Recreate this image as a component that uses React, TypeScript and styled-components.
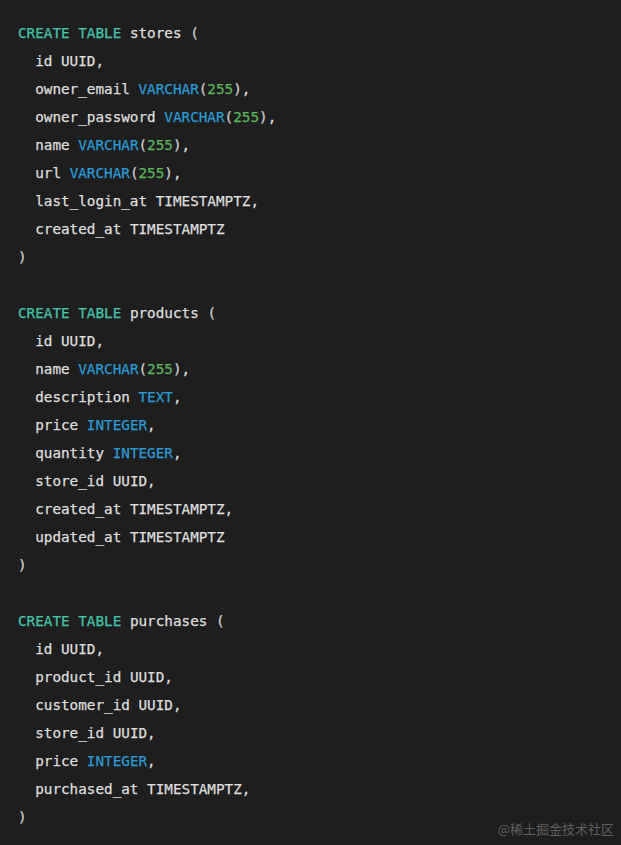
import React from "react";
import styled, { createGlobalStyle } from "styled-components";

const Global = createGlobalStyle`
  html, body { margin: 0; padding: 0; background: #1e1e1e; }
`;

const Block = styled.pre`
  position: relative;
  margin: 0;
  box-sizing: border-box;
  width: 621px;
  height: 845px;
  padding: 19px 18px 0 18px;
  background: #1e1e1e;
  color: #dedede;
  font-family: "DejaVu Sans Mono", "Liberation Mono", monospace;
  font-size: 14.3px;
  line-height: 28px;
  -webkit-text-stroke: 0.25px currentColor;
  overflow: hidden;
`;

const Line = styled.div<{ $indent?: boolean }>`
  height: 28px;
  white-space: pre;
  padding-left: ${(p) => (p.$indent ? "17.2px" : "0")};
`;

const Kw = styled.span`
  color: #43c2a8;
`;
const Ty = styled.span`
  color: #2b9ad3;
`;
const Num = styled.span`
  color: #5bb35d;
`;
const Punc = styled.span`
  color: #cfcfcf;
`;

const Watermark = styled.div`
  position: absolute;
  right: 7px;
  bottom: 7px;
  font-family: "Noto Sans CJK SC", "Noto Sans", sans-serif;
  font-size: 13px;
  line-height: 18px;
  color: #5f5f5f;
  -webkit-text-stroke: 0;
`;

type Col = { name: string; type: string; num?: boolean; kind?: "ty" | "plain"; comma: boolean };

const tables: { name: string; cols: Col[] }[] = [
  {
    name: "stores",
    cols: [
      { name: "id", type: "UUID", kind: "plain", comma: true },
      { name: "owner_email", type: "VARCHAR", num: true, kind: "ty", comma: true },
      { name: "owner_password", type: "VARCHAR", num: true, kind: "ty", comma: true },
      { name: "name", type: "VARCHAR", num: true, kind: "ty", comma: true },
      { name: "url", type: "VARCHAR", num: true, kind: "ty", comma: true },
      { name: "last_login_at", type: "TIMESTAMPTZ", kind: "plain", comma: true },
      { name: "created_at", type: "TIMESTAMPTZ", kind: "plain", comma: false },
    ],
  },
  {
    name: "products",
    cols: [
      { name: "id", type: "UUID", kind: "plain", comma: true },
      { name: "name", type: "VARCHAR", num: true, kind: "ty", comma: true },
      { name: "description", type: "TEXT", kind: "ty", comma: true },
      { name: "price", type: "INTEGER", kind: "ty", comma: true },
      { name: "quantity", type: "INTEGER", kind: "ty", comma: true },
      { name: "store_id", type: "UUID", kind: "plain", comma: true },
      { name: "created_at", type: "TIMESTAMPTZ", kind: "plain", comma: true },
      { name: "updated_at", type: "TIMESTAMPTZ", kind: "plain", comma: false },
    ],
  },
  {
    name: "purchases",
    cols: [
      { name: "id", type: "UUID", kind: "plain", comma: true },
      { name: "product_id", type: "UUID", kind: "plain", comma: true },
      { name: "customer_id", type: "UUID", kind: "plain", comma: true },
      { name: "store_id", type: "UUID", kind: "plain", comma: true },
      { name: "price", type: "INTEGER", kind: "ty", comma: true },
      { name: "purchased_at", type: "TIMESTAMPTZ", kind: "plain", comma: true },
    ],
  },
];

export default function App() {
  return (
    <>
      <Global />
      <Block>
        {tables.map((t, ti) => (
          <React.Fragment key={t.name}>
            {ti > 0 && <Line />}
            <Line>
              <Kw>CREATE TABLE</Kw> {t.name} <Punc>(</Punc>
            </Line>
            {t.cols.map((c) => (
              <Line $indent key={c.name}>
                {c.name}{" "}
                {c.kind === "ty" ? <Ty>{c.type}</Ty> : c.type}
                {c.num && (
                  <>
                    <Punc>(</Punc>
                    <Num>255</Num>
                    <Punc>)</Punc>
                  </>
                )}
                {c.comma ? "," : ""}
              </Line>
            ))}
            <Line>
              <Punc>)</Punc>
            </Line>
          </React.Fragment>
        ))}
        <Watermark>@稀土掘金技术社区</Watermark>
      </Block>
    </>
  );
}
